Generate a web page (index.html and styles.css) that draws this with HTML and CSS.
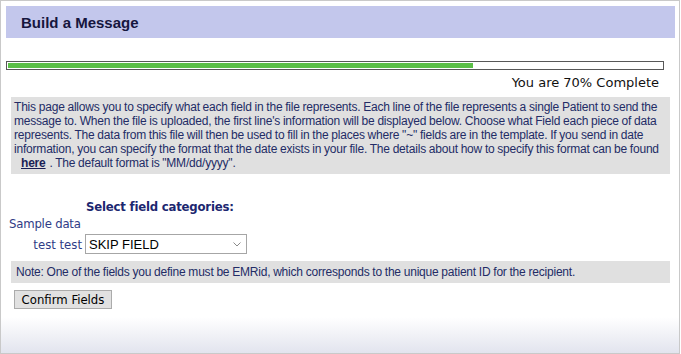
FILE: index.html
```html
<!DOCTYPE html>
<html lang="en">
<head>
<meta charset="utf-8">
<title>Build a Message</title>
<link rel="stylesheet" href="styles.css">
</head>
<body>
<div class="page">
  <div class="header"><h1 class="title">Build a Message</h1></div>

  <div class="progress"><div class="progress-fill" style="width:71.1%"></div></div>
  <div class="progress-text">You are 70% Complete</div>

  <div class="info">This page allows you to specify what each field in the file represents. Each line of the file represents a single Patient to send the message to. When the file is uploaded, the first line's information will be displayed below. Choose what Field each piece of data represents. The data from this file will then be used to fill in the places where "~" fields are in the template. If you send in date information, you can specify the format that the date exists in your file. The details about how to specify this format can be found <a class="here" href="#">here</a> . The default format is "MM/dd/yyyy".</div>

  <div class="fields">
    <div class="fields-heading">Select field categories:</div>
    <div class="sample-label">Sample data</div>
    <div class="field-row">
      <span class="field-value">test test</span>
      <span class="select-wrap">
        <select class="field-select">
          <option>SKIP FIELD</option>
          <option>EMRid</option>
        </select>
        <svg class="chevron" width="8" height="5" viewBox="0 0 8 5"><path d="M0.5 0.5 L4 4 L7.5 0.5" fill="none" stroke="#8a8a8a" stroke-width="1"/></svg>
      </span>
    </div>
  </div>

  <div class="note">Note: One of the fields you define must be EMRid, which corresponds to the unique patient ID for the recipient.</div>

  <button class="confirm" type="button">Confirm Fields</button>
</div>
</body>
</html>
```

FILE: styles.css
```css
html, body {
  margin: 0;
  padding: 0;
  background: #ffffff;
}

.page {
  box-sizing: border-box;
  width: 680px;
  height: 354px;
  border: 1px solid #c9c9c9;
  padding: 5px 4px 0 5px;
  overflow: hidden;
  background: linear-gradient(to bottom, #ffffff 0, #ffffff 316px, #e2e4ee 352px);
}

.header {
  height: 32px;
  background: #c3c7ec;
  padding-left: 15px;
}

.title {
  margin: 0;
  font-family: "Liberation Sans", Arial, sans-serif;
  font-weight: bold;
  font-size: 15px;
  line-height: 33px;
  color: #16163e;
}

.progress {
  box-sizing: border-box;
  margin-top: 23px;
  width: 658px;
  height: 9px;
  border: 1px solid #585858;
  padding: 1px;
  background: #ffffff;
}

.progress-fill {
  height: 5px;
  background: #5bbf47;
}

.progress-text {
  margin-top: 5px;
  margin-right: 16px;
  text-align: right;
  font-family: "DejaVu Sans", Verdana, sans-serif;
  font-size: 13px;
  line-height: 15px;
  color: #111111;
}

.info {
  margin: 7px 5px 0 5px;
  padding: 3px 3px 4px 3px;
  background: #e0e0e0;
  font-family: "Liberation Sans", Arial, sans-serif;
  font-size: 12px;
  line-height: 14px;
  letter-spacing: -0.2px;
  word-spacing: -0.3px;
  color: #232c66;
}

.here {
  color: #1a1f55;
  font-weight: bold;
  text-decoration: underline;
  margin-left: 7px;
  margin-right: 1px;
}

.fields {
  margin-top: 25px;
  font-family: "DejaVu Sans Condensed", "DejaVu Sans", sans-serif;
  font-stretch: semi-condensed;
  font-size: 13px;
  color: #2f3b86;
}

.fields-heading {
  margin-left: 80px;
  font-weight: bold;
  line-height: 16px;
  letter-spacing: -0.2px;
  color: #1c2770;
}

.sample-label {
  margin-left: 3px;
  margin-top: 1px;
  line-height: 16px;
  letter-spacing: -0.2px;
}

.field-row {
  display: flex;
  align-items: center;
  margin-top: 2px;
}

.field-value {
  box-sizing: border-box;
  width: 79px;
  padding-right: 3px;
  text-align: right;
}

.select-wrap {
  position: relative;
  display: inline-block;
}

.field-select {
  box-sizing: border-box;
  display: block;
  width: 162px;
  height: 20px;
  margin: 0;
  padding: 0 0 0 3px;
  border: 1px solid #a6a6a6;
  border-radius: 0;
  background: #ffffff;
  -webkit-appearance: none;
  appearance: none;
  font-family: "Liberation Sans", Arial, sans-serif;
  font-size: 13px;
  color: #000000;
}

.chevron {
  position: absolute;
  right: 6px;
  top: 8px;
  pointer-events: none;
}

.note {
  margin: 7px 5px 0 5px;
  padding: 4px 5px;
  background: #e0e0e0;
  font-family: "Liberation Sans", Arial, sans-serif;
  font-size: 12px;
  line-height: 14px;
  letter-spacing: -0.2px;
  word-spacing: -0.3px;
  color: #232c66;
}

.confirm {
  box-sizing: border-box;
  display: block;
  margin: 7px 0 0 8px;
  width: 98px;
  height: 19px;
  padding: 0;
  border: 1px solid #ababab;
  border-radius: 0;
  background: #e1e1e1;
  font-family: "DejaVu Sans Condensed", "DejaVu Sans", sans-serif;
  font-stretch: semi-condensed;
  font-size: 13px;
  line-height: 17px;
  color: #000000;
}
```
